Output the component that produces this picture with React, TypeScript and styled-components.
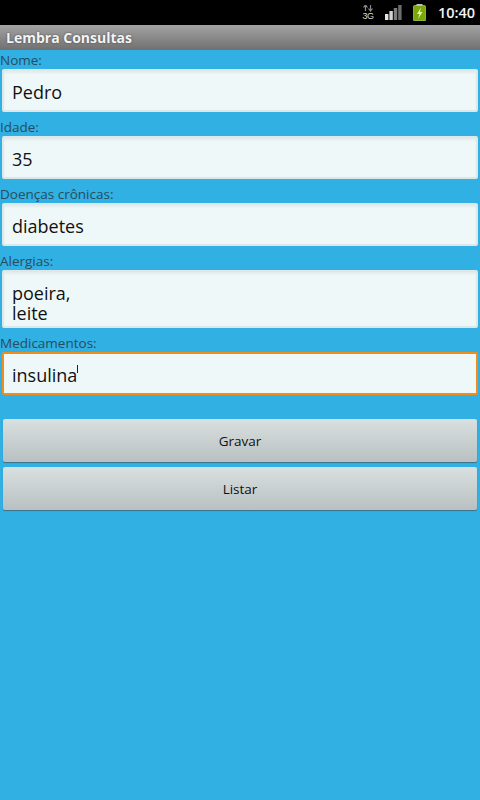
import React from 'react';
import styled, { createGlobalStyle } from 'styled-components';

const GlobalStyle = createGlobalStyle`
  html, body {
    margin: 0;
    padding: 0;
    height: 100%;
    background: #30b0e3;
  }
`;

const Screen = styled.div`
  width: 480px;
  height: 800px;
  display: flex;
  flex-direction: column;
  overflow: hidden;
  background: #30b0e3;
  font-family: "Open Sans", "Noto Sans", sans-serif;
`;

const StatusBar = styled.div`
  height: 25px;
  flex-shrink: 0;
  display: flex;
  align-items: center;
  justify-content: flex-end;
  background: #000;
`;

const NetworkIcon = styled.div`
  width: 12px;
  margin-right: 11px;
  display: flex;
  flex-direction: column;
  align-items: center;
  color: #d8d8d8;
`;

const NetworkLabel = styled.span`
  font-family: "Liberation Sans", sans-serif;
  font-size: 9px;
  line-height: 9px;
  letter-spacing: -0.5px;
`;

const SignalIcon = styled.svg`
  width: 17px;
  height: 15px;
  margin-right: 11px;
`;

const BatteryIcon = styled.svg`
  width: 13px;
  height: 17px;
  margin-right: 12px;
`;

const Clock = styled.span`
  width: 42px;
  margin-right: 0;
  padding-right: 0;
  color: #f2f2f2;
  font-size: 14.5px;
  font-weight: 600;
  white-space: nowrap;
`;

const TitleBar = styled.div`
  height: 25px;
  flex-shrink: 0;
  padding-left: 6px;
  display: flex;
  align-items: center;
  background: linear-gradient(#a3a3a3, #707070);
  color: #f4f4f4;
  font-size: 14px;
  font-weight: 700;
  text-shadow: 0 0 2px #444;
`;

const Form = styled.div`
  display: flex;
  flex-direction: column;
  padding-top: 1px;
`;

const Label = styled.div`
  height: 18px;
  line-height: 18px;
  color: #2a4c5c;
  font-size: 13.5px;
`;

const Field = styled.div<{ $focused?: boolean; $rows?: number }>`
  box-sizing: border-box;
  margin: 0 2px 6px;
  height: ${(p) => (p.$rows === 2 ? 58 : 43)}px;
  padding: 11px 8px 0;
  background: #eff8f8;
  border: 2px solid ${(p) => (p.$focused ? '#f18d1b' : '#dde7e8')};
  border-radius: 2px;
  box-shadow: ${(p) => (p.$focused ? 'none' : 'inset 0 2px 2px #e3ecec')};
  color: #111;
  font-size: 18px;
  line-height: 20px;
  white-space: pre-line;
`;

const Caret = styled.span`
  display: inline-block;
  width: 1px;
  height: 8px;
  margin-left: 0;
  vertical-align: 9px;
  background: #222;
`;

const Buttons = styled.div`
  display: flex;
  flex-direction: column;
  gap: 5px;
  margin: 18px 3px 0;
`;

const Button = styled.div`
  height: 43px;
  display: flex;
  align-items: center;
  justify-content: center;
  border-radius: 2px;
  background: linear-gradient(#dae0e0, #b9c0c1);
  box-shadow: 0 1px 1px #3f6f85;
  color: #111;
  font-size: 13.5px;
`;

export default function App() {
  return (
    <Screen>
      <GlobalStyle />
      <StatusBar>
        <NetworkIcon>
          <svg width="12" height="7" viewBox="0 0 12 7">
            <path d="M3.5 0v6M1.5 2.5l2-2.5 2 2.5" fill="none" stroke="#8a8a8a" strokeWidth="1.2" />
            <path d="M8.5 6V0M6.5 3.5l2 2.5 2-2.5" fill="none" stroke="#8a8a8a" strokeWidth="1.2" />
          </svg>
          <NetworkLabel>3G</NetworkLabel>
        </NetworkIcon>
        <SignalIcon viewBox="0 0 17 15">
          <rect x="0" y="9" width="3.4" height="6" fill="#e4e4e4" />
          <rect x="4.4" y="6" width="3.4" height="9" fill="#d4d4d4" />
          <rect x="8.8" y="3" width="3.4" height="12" fill="#7c7c7c" />
          <rect x="13.2" y="0" width="3.4" height="15" fill="#6c6c6c" />
        </SignalIcon>
        <BatteryIcon viewBox="0 0 13 17">
          <rect x="3.5" y="0" width="6" height="2" fill="#c4c4c4" />
          <rect x="0.5" y="1.5" width="12" height="15.5" rx="1" fill="#7aa80c" stroke="#c8d8a0" strokeWidth="0.6" />
          <path d="M8 3.5L4 10h2.5L5 15l4.5-7H7z" fill="#eaf59a" />
        </BatteryIcon>
        <Clock>10:40</Clock>
      </StatusBar>
      <TitleBar>Lembra Consultas</TitleBar>
      <Form>
        <Label>Nome:</Label>
        <Field>Pedro</Field>
        <Label>Idade:</Label>
        <Field>35</Field>
        <Label>Doenças crônicas:</Label>
        <Field>diabetes</Field>
        <Label>Alergias:</Label>
        <Field $rows={2}>{'poeira,\nleite'}</Field>
        <Label>Medicamentos:</Label>
        <Field $focused>
          insulina
          <Caret />
        </Field>
      </Form>
      <Buttons>
        <Button>Gravar</Button>
        <Button>Listar</Button>
      </Buttons>
    </Screen>
  );
}
